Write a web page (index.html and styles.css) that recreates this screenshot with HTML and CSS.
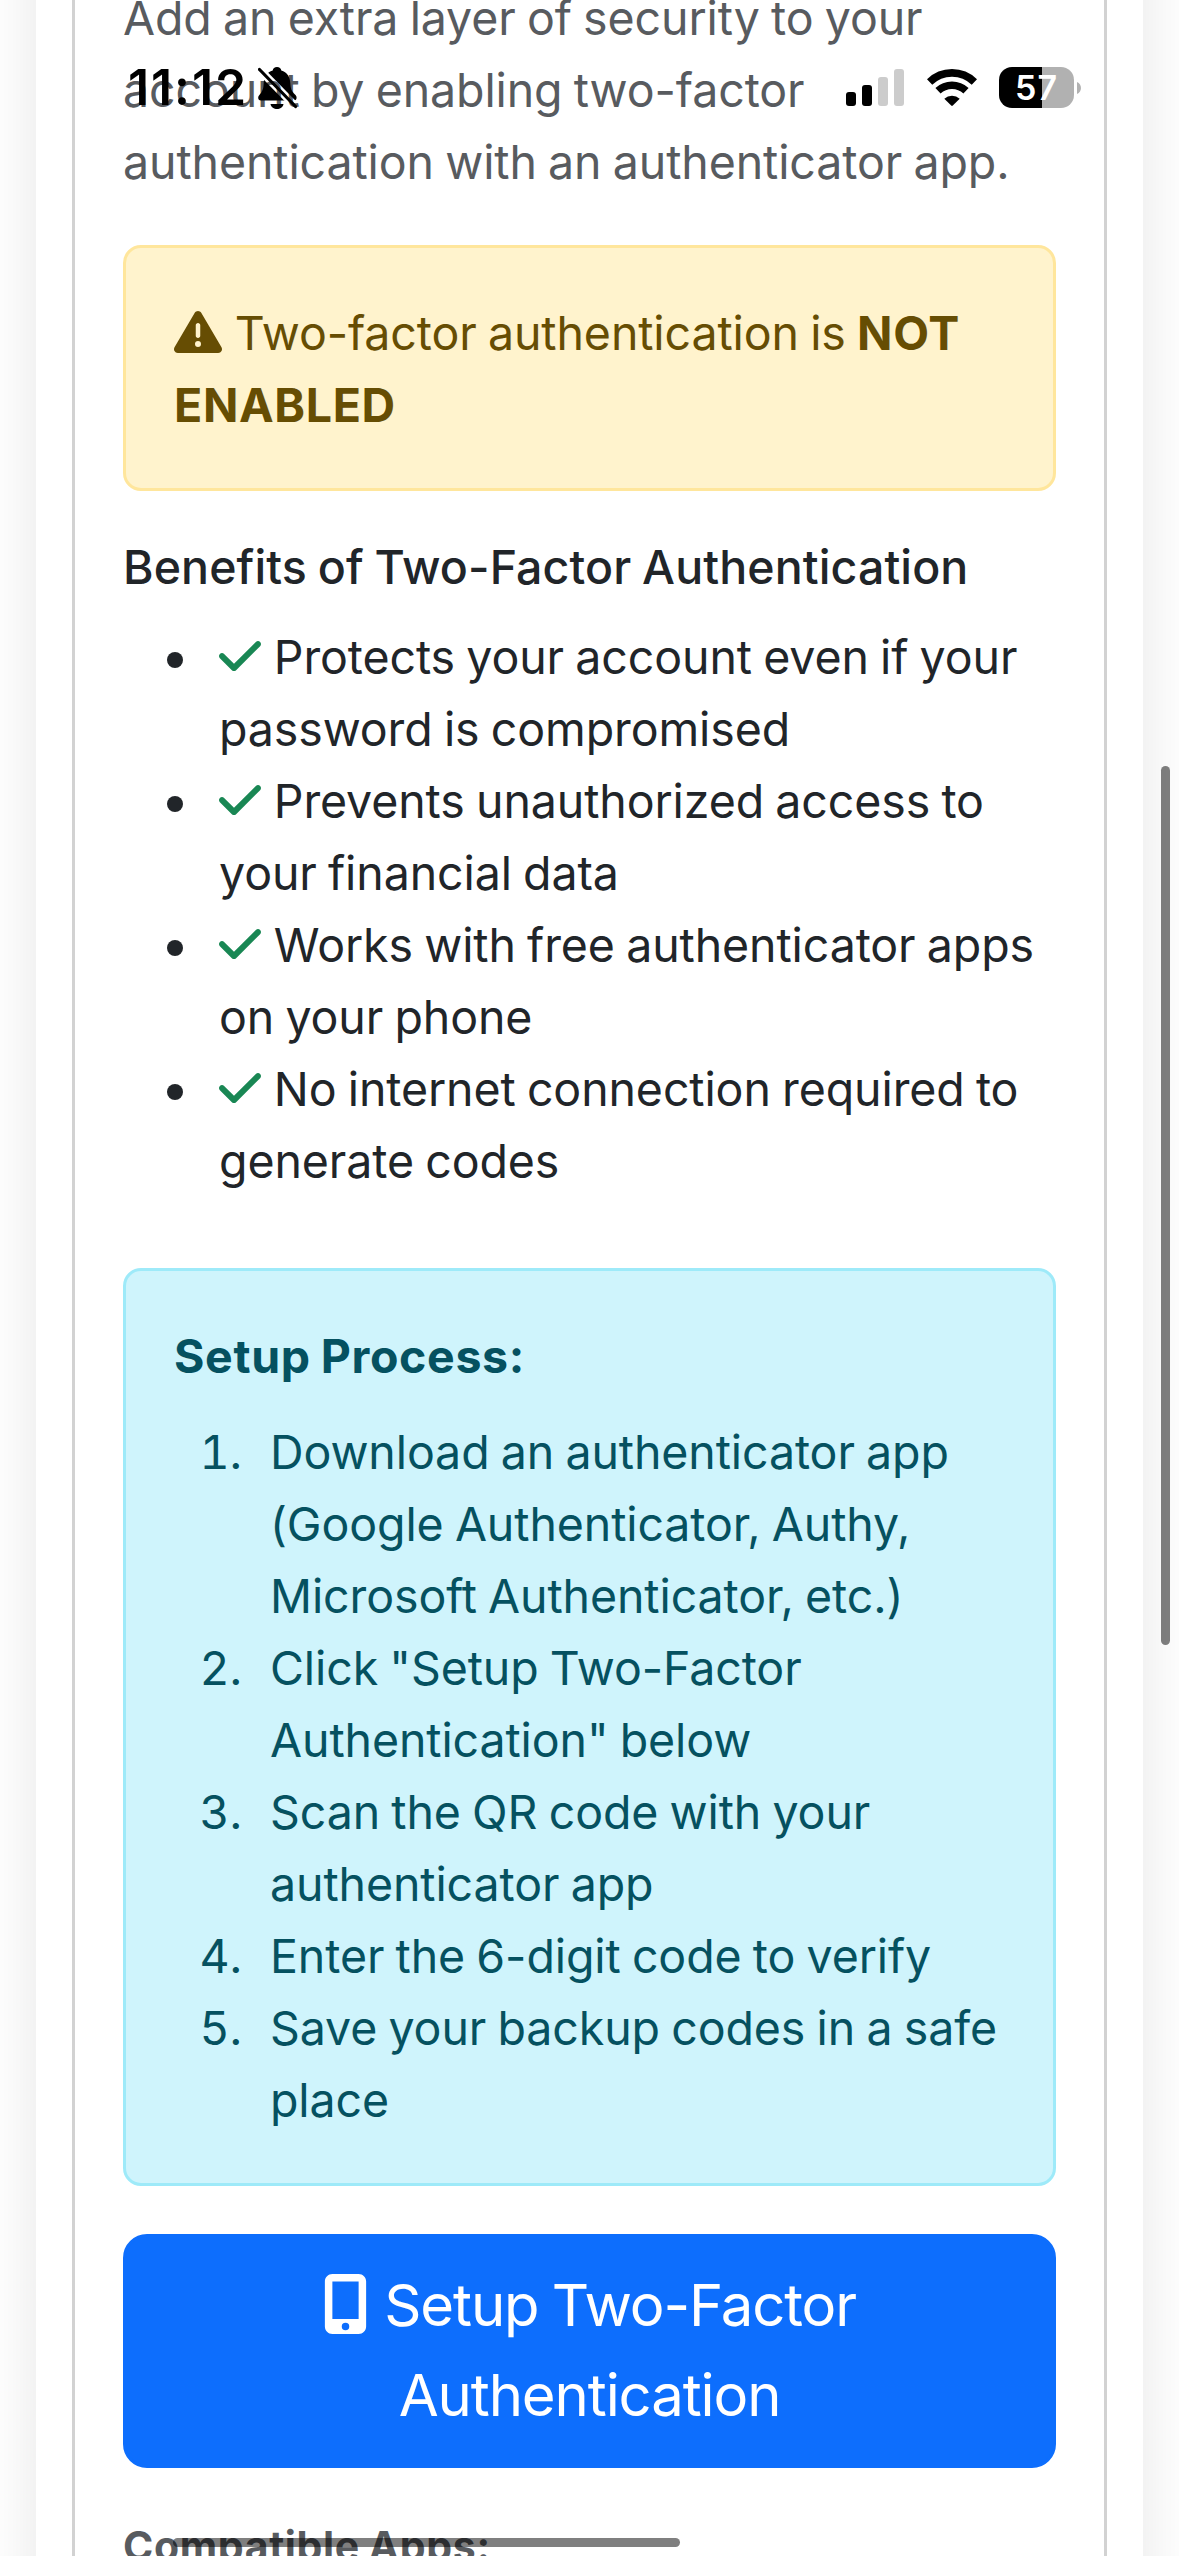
FILE: index.html
```
<!DOCTYPE html>
<html lang="en">
<head>
  <meta charset="UTF-8">
  <title>Two-Factor Authentication</title>
  <link rel="stylesheet" href="styles.css">
</head>
<body>
<svg width="0" height="0" class="sprite">
  <symbol id="icon-check" viewBox="0 0 448 512">
    <path d="M438.6 105.4c12.5 12.5 12.5 32.8 0 45.3l-256 256c-12.5 12.5-32.8 12.5-45.3 0l-128-128c-12.5-12.5-12.5-32.8 0-45.3s32.8-12.5 45.3 0L160 338.7 393.4 105.4c12.5-12.5 32.8-12.5 45.3 0z"/>
  </symbol>
</svg>
<div class="screen">
  <div class="page">
    <div class="card">
      <p class="text-muted">Add an extra layer of security to your account by enabling two-factor authentication with an authenticator app.</p>

      <div class="alert alert-warning">
        <svg class="icon" viewBox="0 0 512 512"><path d="M256 32c14.2 0 27.3 7.5 34.5 19.8l216 368c7.3 12.4 7.3 27.7 .2 40.1S486.3 480 472 480L40 480c-14.3 0-27.6-7.7-34.7-20.1s-7-27.8 .2-40.1l216-368C228.7 39.5 241.8 32 256 32zm0 128c-13.3 0-24 10.7-24 24l0 112c0 13.3 10.7 24 24 24s24-10.7 24-24l0-112c0-13.3-10.7-24-24-24zm32 224a32 32 0 1 0 -64 0 32 32 0 1 0 64 0z"/></svg>
        Two-factor authentication is <strong>NOT ENABLED</strong>
      </div>

      <h6>Benefits of Two-Factor Authentication</h6>
      <ul class="benefits">
        <li><svg class="icon icon-check"><use href="#icon-check"/></svg> Protects your account even if your password is compromised</li>
        <li><svg class="icon icon-check"><use href="#icon-check"/></svg> Prevents unauthorized access to your financial data</li>
        <li><svg class="icon icon-check"><use href="#icon-check"/></svg> Works with free authenticator apps on your phone</li>
        <li><svg class="icon icon-check"><use href="#icon-check"/></svg> No internet connection required to generate codes</li>
      </ul>

      <div class="alert alert-info">
        <strong>Setup Process:</strong>
        <ol class="steps">
          <li>Download an authenticator app (Google Authenticator, Authy, Microsoft Authenticator, etc.)</li>
          <li>Click "Setup Two-Factor Authentication" below</li>
          <li>Scan the QR code with your authenticator app</li>
          <li>Enter the 6-digit code to verify</li>
          <li>Save your backup codes in a safe place</li>
        </ol>
      </div>

      <button class="btn">
        <svg class="icon icon-mobile" viewBox="0 0 384 512"><path d="M16 64C16 28.7 44.7 0 80 0L304 0c35.3 0 64 28.7 64 64l0 384c0 35.3-28.7 64-64 64L80 512c-35.3 0-64-28.7-64-64L16 64zM224 448a32 32 0 1 0 -64 0 32 32 0 1 0 64 0zM304 64L80 64l0 320 224 0 0-320z"/></svg>
        Setup Two-Factor Authentication
      </button>

      <div class="apps text-muted"><strong>Compatible Apps:</strong></div>
    </div>
  </div>

  <!-- phone status bar, floats over the page -->
  <div class="status-bar">
    <span class="clock">11:12</span>
    <svg class="bell" viewBox="0 0 40 42">
      <mask id="slash-gap">
        <rect width="40" height="42" fill="#fff"/>
        <path d="M-2 -1L41 43" stroke="#000" stroke-width="8"/>
      </mask>
      <g mask="url(#slash-gap)">
        <path d="M19 0C21.5 0 23 1.500 23.300 3.500C29 5 32 10 32.300 16C32.600 22 33.500 24 37 27.500C39.500 29.500 39 33.500 36 33.500H3C0 33.500 -.5 30 1 28.500C4.500 24.500 5.500 22 5.700 16C6 10 9 5 14.700 3.500C15 1.500 16.500 0 19 0Z"/>
        <path d="M12.500 37H25.500C25 40.500 22 42 19 42S13 40.500 12.500 37Z"/>
      </g>
      <path d="M1.500 2.500L37.500 39.500" stroke="#000" stroke-width="3.200" stroke-linecap="round"/>
    </svg>
    <svg class="signal" viewBox="0 0 58 37">
      <rect x="0" y="23" width="10" height="14" rx="3"/>
      <rect x="16" y="16" width="10" height="21" rx="3"/>
      <rect x="32" y="8" width="10" height="29" rx="3" fill="#ccc"/>
      <rect x="48" y="0" width="10" height="37" rx="3" fill="#ccc"/>
    </svg>
    <svg class="wifi" viewBox="0 0 50 37">
      <path d="M2.600 13A32 32 0 0 1 47.400 13" fill="none" stroke="#000" stroke-width="7.600"/>
      <path d="M11 21.800A20.500 20.500 0 0 1 39 21.800" fill="none" stroke="#000" stroke-width="7.600"/>
      <path d="M17.300 29.800A11.500 11.500 0 0 1 32.700 29.800L25.800 36.600Q25 37.300 24.200 36.600Z"/>
    </svg>
    <span class="battery">57</span>
    <svg class="battery-tip" viewBox="0 0 4 12"><path d="M0 0C5.300 2 5.300 10 0 12Z" fill="#b1b1b1"/></svg>
  </div>

  <div class="scrollbar scrollbar-y"></div>
  <div class="scrollbar scrollbar-x"></div>
</div>
</body>
</html>
```
FILE: styles.css
```
* {
  box-sizing: border-box;
}
body {
  margin: 0;
  background: #fff;
  color: #212529;
  font-family: Inter, "Noto Sans", sans-serif;
  font-size: 46.5px;
  line-height: 72px;
  letter-spacing: -0.1px;
  word-spacing: -1.7px;
}
.sprite {
  position: absolute;
}
.screen {
  position: relative;
  width: 1179px;
  height: 2556px;
  overflow: hidden;
}
/* starts above the viewport, as if scrolled */
.page {
  height: 2800px;
  margin: -120px 36px 0;
  padding: 0 36px;
  background: #fff;
  box-shadow: 0 0 60px rgba(0, 0, 0, 0.1);
}
.card {
  height: 100%;
  padding: 102px 48px 0;
  border: 3px solid #d2d2d2;
  border-width: 0 3px;
}
p {
  margin: 0 0 47px;
}
.text-muted {
  color: #585b5f;
}
strong {
  font-weight: 700;
  letter-spacing: 0.65px;
}
.icon {
  width: 48px;
  height: 48px;
  margin-right: 1.5px;
  fill: currentColor;
  vertical-align: -6px;
}
.icon-check {
  width: 42px;
  color: #198754;
}
.icon-mobile {
  width: 45px;
  height: 60px;
  margin-right: 3px;
  vertical-align: -8px;
}

.alert {
  padding: 49px 48px 47px;
  margin-bottom: 48px;
  border: 3px solid;
  border-radius: 18px;
}
.alert-warning {
  background: #fff3cd;
  border-color: #ffe69c;
  color: #664d03;
}
.alert-info {
  background: #cff4fc;
  border-color: #9eeaf9;
  color: #055160;
}

h6 {
  margin: 0 0 24px;
  font-size: 46.5px;
  font-weight: 500;
  line-height: 57.6px;
  letter-spacing: 0.1px;
}
ul, ol {
  list-style: none;
  margin: 0;
  padding-left: 96px;
}
.benefits {
  margin-bottom: 71px;
}
.benefits li::before {
  content: "";
  display: inline-block;
  width: 16px;
  height: 16px;
  margin: 0 36px 0 -52px;
  border-radius: 50%;
  background: #212529;
  vertical-align: 6px;
}
.steps {
  margin-top: 24px;
  counter-reset: step;
}
.steps li {
  counter-increment: step;
}
.steps li::before {
  content: counter(step) ".";
  display: inline-block;
  width: 68px;
  margin: 0 28px 0 -96px;
  font-variant-numeric: tabular-nums;
  text-align: right;
}

.btn {
  display: block;
  width: 100%;
  padding: 23px 48px 25px;
  border: 3px solid #0d6efd;
  border-radius: 24px;
  background: #0d6efd;
  color: #fff;
  font-family: inherit;
  font-size: 58px;
  line-height: 90px;
  letter-spacing: -1.1px;
  word-spacing: -2px;
}
.apps {
  margin-top: 47px;
  font-size: 41px;
  line-height: 63px;
}

.status-bar {
  position: absolute;
  top: 66px;
  left: 0;
  right: 0;
  display: flex;
  align-items: center;
  height: 43px;
  padding: 0 98px 0 128px;
}
.clock {
  width: 130px;
  color: #000;
  font-size: 50px;
  font-weight: 600;
  line-height: 43px;
  letter-spacing: 1.9px;
}
.bell {
  width: 40px;
  height: 42px;
}
.signal {
  width: 58px;
  height: 37px;
  margin-left: auto;
}
.wifi {
  width: 50px;
  height: 37px;
  margin: 0 22px 0 23px;
}
.battery {
  width: 75px;
  height: 41px;
  border-radius: 13px;
  background: linear-gradient(to right, #000 43px, #b1b1b1 43px);
  color: #fff;
  font-size: 34px;
  font-weight: 600;
  line-height: 42px;
  letter-spacing: 1px;
  text-align: center;
}
.battery-tip {
  width: 4px;
  height: 12px;
  margin-left: 3px;
}

.scrollbar {
  position: absolute;
  border-radius: 5px;
  background: rgba(0, 0, 0, 0.5);
}
.scrollbar-y {
  top: 766px;
  left: 1161px;
  width: 9px;
  height: 879px;
}
.scrollbar-x {
  top: 2538px;
  left: 173px;
  width: 507px;
  height: 9px;
}
```
